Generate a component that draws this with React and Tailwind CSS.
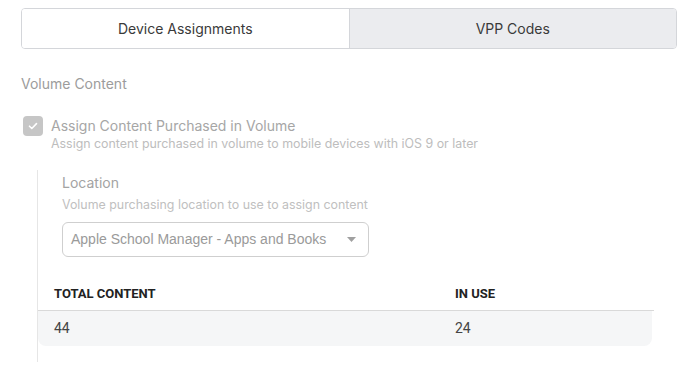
import React, { useState } from "react";

const App = () => {
  const [activeTab, setActiveTab] = useState("devices");

  return (
    <div className="w-[688px] h-[375px] bg-white overflow-hidden font-['Inter',sans-serif]">
      <div className="pl-[21px] pr-[11px] pt-2">
        {/* Tabs */}
        <div className="flex h-[41px] border border-[#d4d6da] rounded-[4px] overflow-hidden">
          {[
            ["devices", "Device Assignments"],
            ["vpp", "VPP Codes"],
          ].map(([key, label]) => (
            <button
              key={key}
              onClick={() => setActiveTab(key)}
              className={`flex-1 text-[14px] text-[#3a3a3a] ${
                key === "vpp" ? "border-l border-[#d4d6da]" : ""
              } ${activeTab === key ? "bg-white" : "bg-[#ebecef]"}`}
            >
              {label}
            </button>
          ))}
        </div>

        {/* Volume content */}
        <p className="mt-[25px] text-[14px] leading-5 text-[#9c9c9c]">Volume Content</p>

        <div className="mt-[22px] flex items-start gap-2 pl-[2px]">
          <div className="w-5 h-5 rounded-[4px] bg-[#c6c6c6] flex items-center justify-center shrink-0">
            <svg width="12" height="12" viewBox="0 0 12 12" fill="none">
              <path d="M2.5 6.2l2.3 2.3 4.7-4.9" stroke="#fff" strokeWidth="1.6" strokeLinecap="round" strokeLinejoin="round" />
            </svg>
          </div>
          <div className="pt-[1px]">
            <p className="text-[14px] leading-[18px] text-[#a6a6a6]">Assign Content Purchased in Volume</p>
            <p className="mt-[1px] text-[12.4px] leading-4 text-[#bdbdbd]">
              Assign content purchased in volume to mobile devices with iOS 9 or later
            </p>
          </div>
        </div>
      </div>

      {/* Location + table */}
      <div className="ml-[37px] w-[617px] mt-[18px] border-l border-[#e6e6e6] pb-4 pt-[3px]">
        <div className="pl-6">
          <p className="text-[14px] leading-5 text-[#a3a3a3]">Location</p>
          <p className="mt-[4px] text-[12.4px] leading-4 text-[#c0c0c0]">
            Volume purchasing location to use to assign content
          </p>
          <div className="mt-[9px] w-[307px] h-[35px] border border-[#cfcfcf] rounded-[6px] flex items-center justify-between pl-2 pr-3">
            <span className="font-['Liberation_Sans',sans-serif] text-[14px] text-[#9a9a9a]">
              Apple School Manager - Apps and Books
            </span>
            <svg width="9" height="5" viewBox="0 0 9 5">
              <path d="M0 0h9L4.5 5z" fill="#a0a0a0" />
            </svg>
          </div>
        </div>

        <div className="mt-[26px] font-['Roboto',sans-serif] text-[14px]">
          <div className="grid grid-cols-[401px_1fr] border-b border-[#d9d9d9] h-[28px] pt-[3px] items-start">
            <p className="px-4 text-[13px] font-bold text-[#222] leading-4">TOTAL CONTENT</p>
            <p className="px-4 text-[13px] font-bold text-[#222] leading-4">IN USE</p>
          </div>
          <div className="grid grid-cols-[401px_1fr] h-[35px] items-center bg-[#f5f6f7] rounded-b-[8px] mr-[2px]">
            <p className="px-4 text-[#444]">44</p>
            <p className="px-4 text-[#444]">24</p>
          </div>
        </div>
      </div>
    </div>
  );
};

export default App;
